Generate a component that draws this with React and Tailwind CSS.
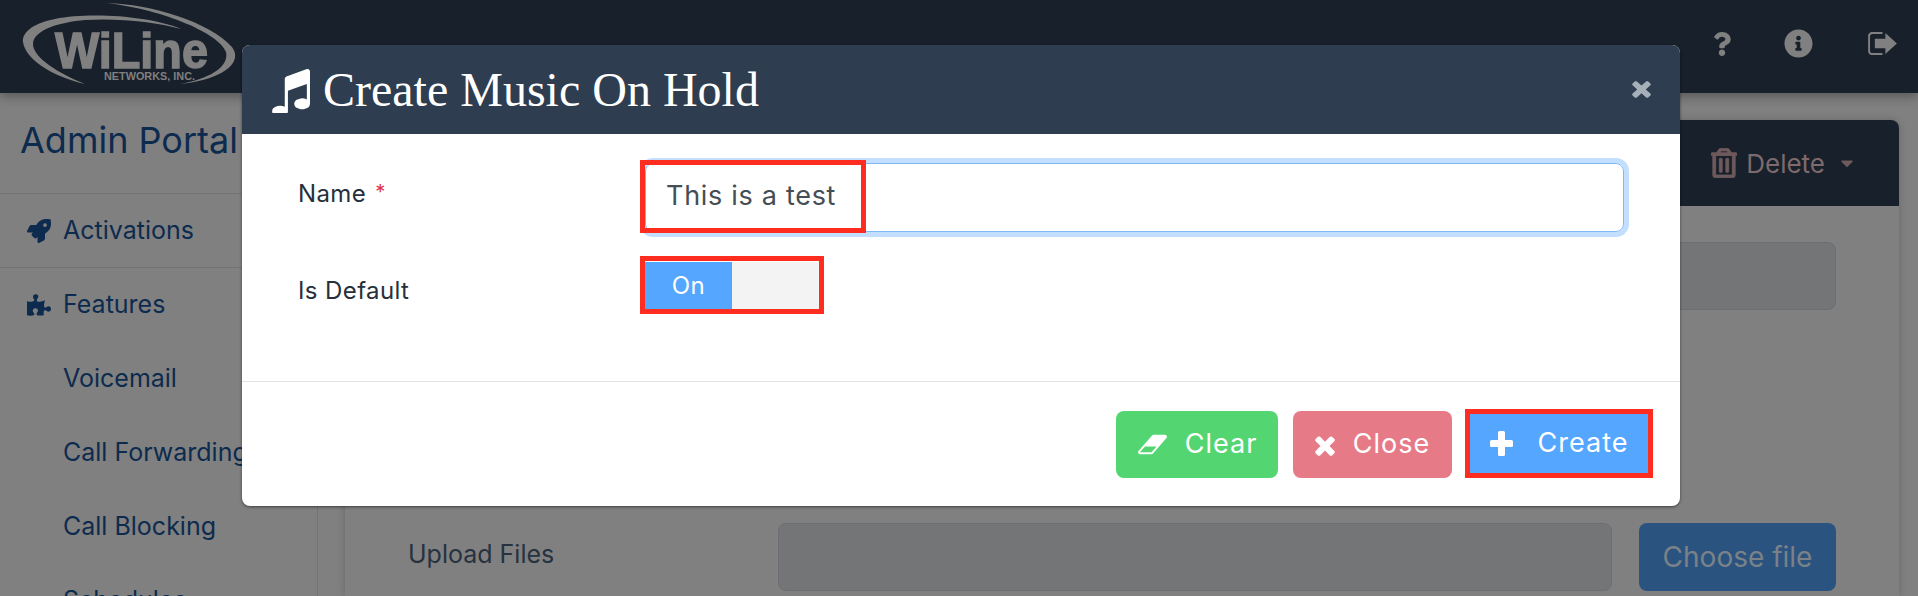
import React from "react";
import { FaRocket, FaPuzzlePiece, FaQuestion, FaInfoCircle, FaRegTrashAlt, FaCaretDown } from "react-icons/fa";

const font = { fontFamily: "Inter, 'Liberation Sans', sans-serif" };

function Music({ className }) {
  return (
    <svg viewBox="0 64 1664 1536" preserveAspectRatio="none" className={className} fill="currentColor">
      <path d="M1664 160v1120q0 50-34 89t-86 60.5-103.5 32-96.5 10.5-96.5-10.5-103.5-32-86-60.5-34-89 34-89 86-60.5 103.5-32 96.5-10.5q105 0 192 39v-537l-768 237v709q0 50-34 89t-86 60.5-103.5 32-96.5 10.5-96.5-10.5-103.5-32-86-60.5-34-89 34-89 86-60.5 103.5-32 96.5-10.5q105 0 192 39v-967q0-31 19-56.5t49-35.5l832-256q12-4 28-4 40 0 68 28t28 68z" />
    </svg>
  );
}

function Eraser({ className }) {
  return (
    <svg viewBox="0 0 2048 1792" className={className} fill="currentColor">
      <path d="M960 1408l336-384h-768l-336 384h768zm1013-1077q15 34 9.5 71.5t-30.5 65.5l-896 1024q-38 44-96 44h-768q-38 0-69.5-20.5t-47.5-54.5q-15-34-9.5-71.5t30.5-65.5l896-1024q38-44 96-44h768q38 0 70 20.5t47 54.5z" />
    </svg>
  );
}

function Times({ className }) {
  return (
    <svg viewBox="100 220 1210 1344" preserveAspectRatio="none" className={className} fill="currentColor">
      <path d="M1298 1322q0 40-28 68l-136 136q-28 28-68 28t-68-28l-294-294-294 294q-28 28-68 28t-68-28l-136-136q-28-28-28-68t28-68l294-294-294-294q-28-28-28-68t28-68l136-136q28-28 68-28t68 28l294 294 294-294q28-28 68-28t68 28l136 136q28 28 28 68t-28 68l-294 294 294 294q28 28 28 68z" />
    </svg>
  );
}

function Plus({ className }) {
  return (
    <svg viewBox="0 0 23 25" className={className} fill="currentColor">
      <rect x="8" y="0" width="7" height="25" rx="1.500" />
      <rect x="0" y="9" width="23" height="7" rx="1.500" />
    </svg>
  );
}

function SignOut({ className }) {
  return (
    <svg viewBox="0 0 30 24" className={className} fill="currentColor">
      <path d="M4 0h11v2H4.500C3 2 2 3 2 4.500v15C2 21 3 22 4.500 22H15v2H4c-2.200 0-4-1.800-4-4V4c0-2.200 1.800-4 4-4z" />
      <path d="M18 1l12 11-12 11v-6H7V7h11z" />
    </svg>
  );
}

function Logo() {
  return (
    <svg viewBox="0 0 240 90" className="w-[240px] h-[90px]" fill="#808080">
      <path d="M107 3 C150 4 210 22 232 47 C243 62 225 79 180 84 C212 78 229 66 226 52 C220 34 165 10 107 3z" />
      <path d="M181 29 C150 16 90 12 55 19 C30 24 22 34 23 42 C25 58 50 76 85 84 C60 74 33 58 33 44 C33 30 60 22 85 20 C120 18 155 22 181 29z" />
      <text x="55" y="68" fontFamily="'Liberation Sans', sans-serif" fontWeight="700" fontSize="50" textLength="153" lengthAdjust="spacingAndGlyphs" stroke="#808080" strokeWidth="1.500">WiLine</text>
      <text x="104" y="80" fontFamily="'Liberation Sans', sans-serif" fontWeight="700" fontSize="10.500" textLength="91" lengthAdjust="spacingAndGlyphs">NETWORKS, INC.</text>
    </svg>
  );
}

function SideItem({ icon, children, border }) {
  return (
    <div className={`flex items-center h-[74px] pl-[63px] relative text-[25px] text-[#0d2b4e] whitespace-nowrap ${border ? "border-b border-[#747474]" : ""}`}>
      {icon && <span className="absolute left-[27px] text-[#0d2b4e] text-[24px]">{icon}</span>}
      {children}
    </div>
  );
}

function Btn({ className, icon, label, gap }) {
  return (
    <button className={`flex items-center justify-center rounded-lg text-white text-[27px] tracking-[1px] ${gap} ${className}`}>
      {icon}
      <span>{label}</span>
    </button>
  );
}

export default function App() {
  return (
    <div className="relative w-[1918px] h-[596px] overflow-hidden bg-[#808080]" style={font}>
      <header className="relative z-10 h-[93px] bg-[#18202b] shadow-[0_4px_10px_rgba(0,0,0,0.3)] flex items-start text-[#808080]">
        <Logo />
        <div className="ml-auto flex items-center pr-[21px] mt-[29px]">
          <FaQuestion className="w-[18px] h-[24px]" />
          <FaInfoCircle className="w-[29px] h-[29px] ml-[53px]" />
          <SignOut className="w-[29px] h-[23px] ml-[55px]" />
        </div>
      </header>

      <div className="flex">
        <aside className="w-[318px] shrink-0 border-r border-[#747474] h-[503px]">
          <div className="h-[101px] pl-[20px] pt-[27px] border-b border-[#747474] text-[36px] text-[#0d2b4e] whitespace-nowrap leading-[40px]">Admin Portal</div>
          <SideItem border icon={<FaRocket />}>Activations</SideItem>
          <SideItem icon={<FaPuzzlePiece />}>Features</SideItem>
          <SideItem>Voicemail</SideItem>
          <SideItem>Call Forwarding</SideItem>
          <SideItem>Call Blocking</SideItem>
          <SideItem>Schedules</SideItem>
        </aside>

        <main className="ml-[27px] mt-[27px] w-[1554px] h-[476px] rounded-t-lg bg-[#808080] shadow-[0_0_8px_rgba(0,0,0,0.2)]">
          <div className="h-[86px] bg-[#18202b] rounded-t-lg flex items-center justify-end pr-[44px] text-[#6e5a5c]">
            <FaRegTrashAlt className="w-[26px] h-[30px]" stroke="currentColor" strokeWidth="16" />
            <span className="ml-[9px] text-[26px] text-[#7d6a6c]">Delete</span>
            <FaCaretDown className="ml-[14px] w-[16px] h-[20px]" />
          </div>
          <div className="pl-[433px] pr-[63px] pt-[36px]">
            <div className="h-[68px] w-[1058px] rounded-lg border border-[#6c6e71] bg-[#747577]"></div>
          </div>
          <div className="flex items-center pl-[63px] pr-[63px] mt-[213px]">
            <div className="w-[370px] text-[25px] text-[#26323f] mt-[-4px]">Upload Files</div>
            <div className="w-[834px] h-[68px] rounded-lg border border-[#6c6e71] bg-[#747577]"></div>
            <button className="ml-[27px] w-[197px] h-[68px] rounded-lg bg-[#2b5380] text-[#7a8288] text-[28px]">Choose file</button>
          </div>
        </main>
      </div>

      <section className="absolute z-20 left-[242px] top-[45px] w-[1438px] h-[461px] rounded-lg bg-white overflow-hidden shadow-[0_1px_3px_rgba(0,0,0,0.5)]">
        <div className="h-[89px] bg-[#2e3e50] flex items-center pl-[27px] pr-[29px] text-white">
          <Music className="w-[41px] h-[44px] mt-[2px]" />
          <h1 className="ml-[13px] text-[48px] leading-none" style={{ fontFamily: "'Liberation Serif', serif" }}>Create Music On Hold</h1>
          <Times className="ml-auto mt-[-2px] w-[19px] h-[19px] text-[#a7afb8]" />
        </div>

        <div className="h-[248px] pl-[56px] pr-[56px] relative border-b border-[#e3e3e3] text-[#26303b]">
          <div className="flex items-center pt-[29px]">
            <label className="w-[347px] text-[24px] tracking-[0.4px] mt-[-8px]">Name <span className="text-[#e0314b] text-[20px] ml-[2px] align-[3px]">*</span></label>
            <div className="relative w-[979px] h-[69px] rounded-lg border border-[#7fb8f5] ring-[5px] ring-[#c3dfff] flex items-center pl-[20px] pb-[2px] text-[27px] tracking-[0.7px] text-[#454d55]">
              This is a test
              <div className="absolute left-[-6px] top-[-4px] w-[226px] h-[73px] border-[5px] border-[#ff2d1f]"></div>
            </div>
          </div>
          <div className="flex items-center mt-[30px]">
            <label className="w-[347px] text-[24px] tracking-[0.4px] mt-[10px]">Is Default</label>
            <div className="relative flex w-[175px] h-[47px]">
              <div className="w-[87px] bg-[#55a6ff] text-white text-[24px] tracking-[0.4px] flex items-center justify-center">On</div>
              <div className="flex-1 bg-[#f3f3f3]"></div>
              <div className="absolute left-[-5px] top-[-6px] w-[184px] h-[58px] border-[5px] border-[#ff2d1f]"></div>
            </div>
          </div>
        </div>

        <div className="flex justify-end pt-[29px] pr-[27px]">
          <Btn className="w-[162px] h-[67px] bg-[#53d671]" gap="gap-[17px]" icon={<Eraser className="w-[31px] h-[27px]" />} label="Clear" />
          <Btn className="w-[159px] h-[67px] ml-[15px] bg-[#e77a87]" gap="gap-[18px]" icon={<Times className="w-[20px] h-[22px]" />} label="Close" />
          <button className="w-[188px] h-[69px] mt-[-2px] ml-[13px] bg-[#55a6ff] border-[5px] border-[#ff2d1f] text-white text-[27px] tracking-[1px] flex items-center justify-center gap-[25px]">
            <Plus className="w-[23px] h-[25px]" />
            <span>Create</span>
          </button>
        </div>
      </section>
    </div>
  );
}
